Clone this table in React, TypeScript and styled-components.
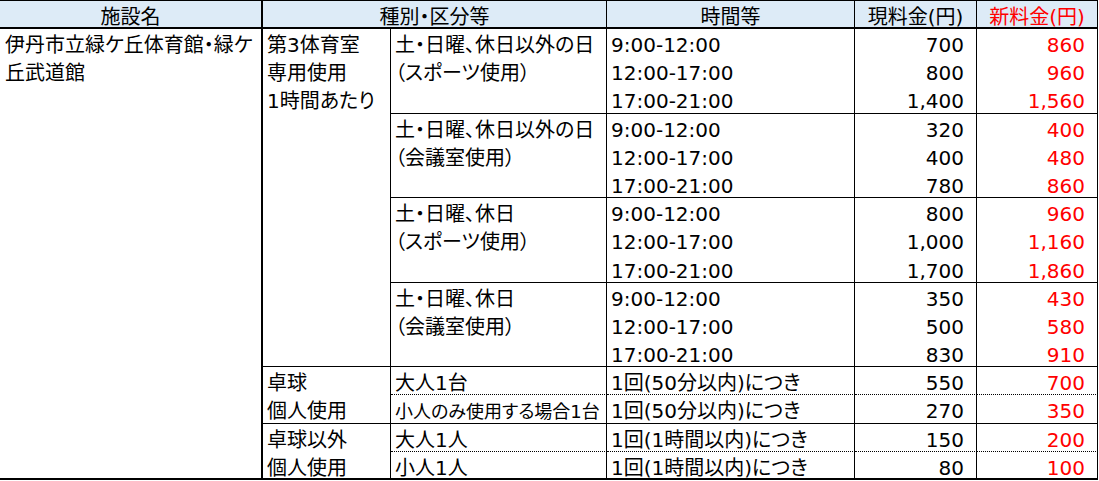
import React from "react";
import styled, {createGlobalStyle} from "styled-components";

// Excel-like fee table laid out on a grid: one row pitch for every text line
const ROW_H = 28.2;

const GlobalStyle = createGlobalStyle`
    html, body {
        margin: 0;
        padding: 0;
        background: #fff;
    }
    body {
        font-family: "DejaVu Sans", "Noto Sans CJK JP", sans-serif;
        font-size: 20px;
        color: #000;
        font-feature-settings: "palt";
    }
`

const Sheet = styled.div`
    display: grid;
    grid-template-columns: 263px 128px 216px 248px 122px 121px;
    grid-template-rows: 28px repeat(16, ${ROW_H}px);
    width: 1098px;
    border-top: 1px solid #000;
`

const HeadCell = styled.div<{ $red?: boolean; $span?: number; $first?: boolean }>`
    grid-column: span ${p => p.$span || 1};
    box-sizing: border-box;
    background: #ddebf7;
    text-align: center;
    color: ${p => (p.$red ? "#ff0000" : "#000")};
    border-right: ${p => (p.$first ? "2px" : "1px")} solid #000;
    border-bottom: 2px solid #000;
`

type Bottom = "solid" | "dotted" | "none" | "thick";

const bottomBorder = (b?: Bottom) => {
    switch (b) {
        case "dotted":
            return "1px dotted #000";
        case "none":
            return "none";
        case "thick":
            return "2px solid #000";
        default:
            return "1px solid #000";
    }
};

const Cell = styled.div<{
    $rows?: number;
    $bottom?: Bottom;
    $num?: boolean;
    $red?: boolean;
    $first?: boolean;
    $small?: boolean;
}>`
    grid-row: span ${p => p.$rows || 1};
    box-sizing: border-box;
    min-width: 0;
    padding: ${p => (p.$num ? "0 12px 0 0" : p.$first ? "0 0 0 5px" : "0 0 0 4px")};
    text-align: ${p => (p.$num ? "right" : "left")};
    color: ${p => (p.$red ? "#ff0000" : "#000")};
    font-size: ${p => (p.$small ? "18px" : "20px")};
    border-right: ${p => (p.$first ? "2px" : "1px")} solid #000;
    border-bottom: ${p => bottomBorder(p.$bottom)};
`

const Line = styled.span`
    display: block;
    box-sizing: border-box;
    height: ${ROW_H}px;
    padding-top: 5px;
    line-height: ${ROW_H - 5}px;
    white-space: nowrap;
`

const Lines = ({lines}: { lines: string[] }) => (
    <>
        {lines.map((l, i) => <Line key={i}>{l}</Line>)}
    </>
);

interface Slot {
    time: string;
    current: string;
    next: string;
}

interface Group {
    label: string[];
    slots: Slot[];
}

const times = ["9:00-12:00", "12:00-17:00", "17:00-21:00"];

const mk = (label: string[], current: string[], next: string[]): Group => ({
    label,
    slots: times.map((time, i) => ({time, current: current[i], next: next[i]}))
});

const gymGroups: Group[] = [
    mk(["土・日曜、休日以外の日", "（スポーツ使用）"], ["700", "800", "1,400"], ["860", "960", "1,560"]),
    mk(["土・日曜、休日以外の日", "（会議室使用）"], ["320", "400", "780"], ["400", "480", "860"]),
    mk(["土・日曜、休日", "（スポーツ使用）"], ["800", "1,000", "1,700"], ["960", "1,160", "1,860"]),
    mk(["土・日曜、休日", "（会議室使用）"], ["350", "500", "830"], ["430", "580", "910"])
];

interface Personal {
    label: string[];
    items: { who: string; small?: boolean; unit: string; current: string; next: string }[];
}

const personal: Personal[] = [
    {
        label: ["卓球", "個人使用"],
        items: [
            {who: "大人1台", unit: "1回(50分以内)につき", current: "550", next: "700"},
            {who: "小人のみ使用する場合1台", small: true, unit: "1回(50分以内)につき", current: "270", next: "350"}
        ]
    },
    {
        label: ["卓球以外", "個人使用"],
        items: [
            {who: "大人1人", unit: "1回(1時間以内)につき", current: "150", next: "200"},
            {who: "小人1人", unit: "1回(1時間以内)につき", current: "80", next: "100"}
        ]
    }
];

const totalRows = gymGroups.length * 3 + personal.length * 2;

const FeeTable = () => {
    const cells: React.ReactNode[] = [];

    gymGroups.forEach((g, gi) => {
        g.slots.forEach((s, si) => {
            const bottom: Bottom = si === g.slots.length - 1 ? "solid" : "none";
            if (gi === 0 && si === 0) {
                cells.push(
                    <Cell key="facility" $first $rows={totalRows} $bottom="thick">
                        <Lines lines={["伊丹市立緑ケ丘体育館・緑ケ", "丘武道館"]}/>
                    </Cell>,
                    <Cell key="room" $rows={gymGroups.length * 3}>
                        <Lines lines={["第3体育室", "専用使用", "1時間あたり"]}/>
                    </Cell>
                );
            }
            if (si === 0) {
                cells.push(
                    <Cell key={`label${gi}`} $rows={3}>
                        <Lines lines={g.label}/>
                    </Cell>
                );
            }
            cells.push(
                <Cell key={`t${gi}-${si}`} $bottom={bottom}><Line>{s.time}</Line></Cell>,
                <Cell key={`c${gi}-${si}`} $bottom={bottom} $num><Line>{s.current}</Line></Cell>,
                <Cell key={`n${gi}-${si}`} $bottom={bottom} $num $red><Line>{s.next}</Line></Cell>
            );
        });
    });

    personal.forEach((p, pi) => {
        const lastGroup = pi === personal.length - 1;
        p.items.forEach((it, ii) => {
            const lastItem = ii === p.items.length - 1;
            const bottom: Bottom = !lastItem ? "dotted" : lastGroup ? "thick" : "solid";
            if (ii === 0) {
                cells.push(
                    <Cell key={`pl${pi}`} $rows={p.items.length} $bottom={lastGroup ? "thick" : "solid"}>
                        <Lines lines={p.label}/>
                    </Cell>
                );
            }
            cells.push(
                <Cell key={`w${pi}-${ii}`} $bottom={bottom} $small={it.small}><Line>{it.who}</Line></Cell>,
                <Cell key={`u${pi}-${ii}`} $bottom={bottom}><Line>{it.unit}</Line></Cell>,
                <Cell key={`pc${pi}-${ii}`} $bottom={bottom} $num><Line>{it.current}</Line></Cell>,
                <Cell key={`pn${pi}-${ii}`} $bottom={bottom} $num $red><Line>{it.next}</Line></Cell>
            );
        });
    });

    return (
        <Sheet>
            <HeadCell $first><Line>施設名</Line></HeadCell>
            <HeadCell $span={2}><Line>種別・区分等</Line></HeadCell>
            <HeadCell><Line>時間等</Line></HeadCell>
            <HeadCell><Line>現料金(円)</Line></HeadCell>
            <HeadCell $red><Line>新料金(円)</Line></HeadCell>
            {cells}
        </Sheet>
    );
};

export default function App() {
    return (
        <>
            <GlobalStyle/>
            <FeeTable/>
        </>
    );
}
